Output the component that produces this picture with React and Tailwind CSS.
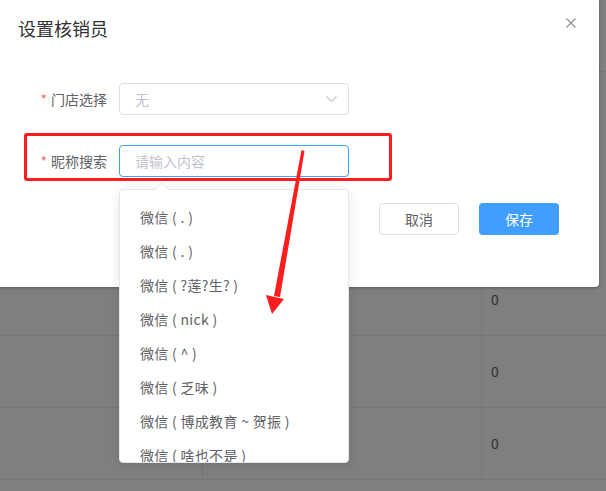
import { useState } from "react";

const options = [
  "微信 ( . )",
  "微信 ( . )",
  "微信 ( ?莲?生? )",
  "微信 ( nick )",
  "微信 ( ^ )",
  "微信 ( 乏味 )",
  "微信 ( 博成教育 ~ 贺振 )",
  "微信 ( 啥也不是 )",
];

const FormLabel = ({ children }) => (
  <label className="w-[119px] pr-[12px] text-right text-[14px] leading-[32px] text-[#606266]">
    <span className="text-[#f56c6c] mr-[4px]">*</span>
    {children}
  </label>
);

const App = () => {
  const [keyword, setKeyword] = useState("");

  return (
    <div
      className="relative w-[606px] h-[491px] overflow-hidden bg-white"
      style={{ fontFamily: '"Noto Sans CJK SC", "Noto Sans", sans-serif' }}
    >
      {/* page behind the modal */}
      <div className="h-[72px] border-b border-[#ebeef5]" />
      <div className="h-[192px]" />
      {[0, 1, 2].map((i) => (
        <div key={i} className="flex h-[72px] border-b border-[#ebeef5]">
          <div className="w-[203px] border-r border-[#ebeef5]" />
          <div className="w-[279px] border-r border-[#ebeef5]" />
          <div className="flex-1 flex items-center pl-[9px] text-[14px] text-[#606266]">0</div>
        </div>
      ))}

      {/* mask */}
      <div className="absolute inset-0 bg-black/50" />

      {/* dialog */}
      <div className="absolute left-0 top-0 w-[599px] h-[287px] bg-white rounded-br-[4px] shadow-[0_1px_3px_rgba(0,0,0,0.3)]">
        <div className="flex items-start justify-between pt-[16px] pl-[18px] pr-[23px]">
          <span className="text-[18px] leading-[24px] text-[#303133]">设置核销员</span>
          <svg width="10" height="10" viewBox="0 0 10 10" className="mt-[2px]">
            <path d="M0.5 0.5L9.5 9.5M9.5 0.5L0.5 9.5" stroke="#909399" strokeWidth="1.2" />
          </svg>
        </div>

        <div className="mt-[43px] flex items-center">
          <FormLabel>门店选择</FormLabel>
          <div className="w-[230px] h-[32px] flex items-center justify-between pl-[15px] pr-[11px] border border-[#dcdfe6] rounded-[4px] text-[14px] text-[#c0c4cc]">
            <span>无</span>
            <svg width="11" height="6" viewBox="0 0 11 6">
              <path d="M0.5 0.5L5.5 5.3L10.5 0.5" fill="none" stroke="#c0c4cc" strokeWidth="1.1" />
            </svg>
          </div>
        </div>

        <div className="mt-[30px] flex items-center">
          <FormLabel>昵称搜索</FormLabel>
          <input
            value={keyword}
            onChange={(e) => setKeyword(e.target.value)}
            placeholder="请输入内容"
            className="w-[230px] h-[32px] px-[15px] border border-[#409eff] rounded-[4px] text-[14px] text-[#606266] outline-none placeholder:text-[#c0c4cc]"
          />
        </div>

        <div className="mt-[26px] flex justify-end gap-[20px] pr-[40px]">
          <button className="w-[80px] h-[32px] border border-[#dcdfe6] rounded-[4px] bg-white text-[14px] text-[#606266]">
            取消
          </button>
          <button className="w-[80px] h-[32px] rounded-[4px] bg-[#409eff] text-[14px] text-white">
            保存
          </button>
        </div>
      </div>

      {/* autocomplete popper */}
      <div className="absolute left-[119px] top-[189px] w-[230px] h-[274px] bg-white border border-[#e4e7ed] rounded-[4px] shadow-[0_2px_12px_rgba(0,0,0,0.1)]">
        <svg width="14" height="7" viewBox="0 0 14 7" className="absolute left-[35px] top-[-7px]">
          <path d="M0 7L7 0L14 7Z" fill="white" />
          <path d="M0 7L7 0L14 7" fill="none" stroke="#e4e7ed" strokeWidth="1" />
        </svg>
        <div className="h-full overflow-hidden rounded-[4px]">
          <ul className="py-[10px]">
            {options.map((o, i) => (
              <li key={i} className="px-[20px] leading-[34px] text-[14px] tracking-[0.3px] text-[#606266] whitespace-nowrap">
                {o}
              </li>
            ))}
          </ul>
        </div>
      </div>

      {/* annotation: red box */}
      <div className="absolute left-[24px] top-[133px] w-[368px] h-[48px] border-[3px] border-[#fe1c1c] rounded-[3px] pointer-events-none" />

      {/* annotation: red arrow */}
      <svg className="absolute inset-0 pointer-events-none" width="606" height="491" viewBox="0 0 606 491">
        <polygon points="301.5,150 304.5,151 280,297 274,296" fill="#fe1c1c" />
        <polygon points="266,295 284,299 272,314" fill="#fe1c1c" />
      </svg>
    </div>
  );
};

export default App;
